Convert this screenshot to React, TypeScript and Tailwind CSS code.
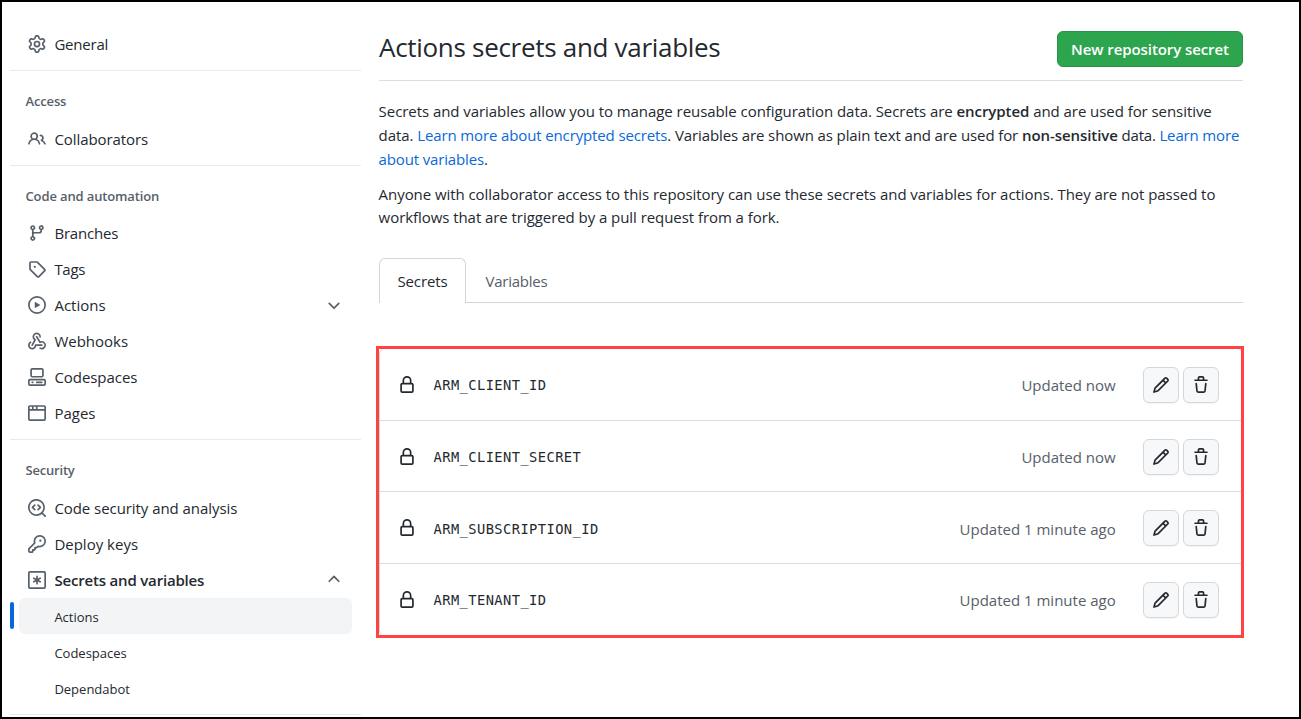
import type { ReactNode } from 'react';
import clsx from 'clsx';

const icons = {
  gear: 'M8 0a8.2 8.2 0 0 1 .701.031C9.444.095 9.99.645 10.16 1.29l.288 1.107c.018.066.079.158.212.224.231.114.454.243.668.386.123.082.233.09.299.071l1.103-.303c.644-.176 1.392.021 1.82.63.27.385.506.792.704 1.218.315.675.111 1.422-.364 1.891l-.814.806c-.049.048-.098.147-.088.294.016.257.016.515 0 .772-.01.147.038.246.088.294l.814.806c.475.469.679 1.216.364 1.891a7.977 7.977 0 0 1-.704 1.217c-.428.61-1.176.807-1.82.63l-1.102-.302c-.067-.019-.177-.011-.3.071a5.909 5.909 0 0 1-.668.386c-.133.066-.194.158-.211.224l-.29 1.106c-.168.646-.715 1.196-1.458 1.26a8.006 8.006 0 0 1-1.402 0c-.743-.064-1.289-.614-1.458-1.26l-.289-1.106c-.018-.066-.079-.158-.212-.224a5.738 5.738 0 0 1-.668-.386c-.123-.082-.233-.09-.299-.071l-1.103.303c-.644.176-1.392-.021-1.82-.63a8.12 8.12 0 0 1-.704-1.218c-.315-.675-.111-1.422.363-1.891l.815-.806c.05-.048.098-.147.088-.294a6.214 6.214 0 0 1 0-.772c.01-.147-.038-.246-.088-.294l-.815-.806C.635 6.045.431 5.298.746 4.623a7.92 7.92 0 0 1 .704-1.217c.428-.61 1.176-.807 1.82-.63l1.102.302c.067.019.177.011.3-.071.214-.143.437-.272.668-.386.133-.066.194-.158.211-.224l.29-1.106C6.009.645 6.556.095 7.299.03 7.53.01 7.764 0 8 0Zm-.571 1.525c-.036.003-.108.036-.137.146l-.289 1.105c-.147.561-.549.967-.998 1.189-.173.086-.34.183-.5.29-.417.278-.97.423-1.529.27l-1.103-.303c-.109-.03-.175.016-.195.045-.22.312-.412.644-.573.99-.014.031-.021.11.059.19l.815.806c.411.406.562.957.53 1.456a4.709 4.709 0 0 0 0 .582c.032.499-.119 1.05-.53 1.456l-.815.806c-.081.08-.073.159-.059.19.162.346.353.677.573.989.02.03.085.076.195.046l1.102-.303c.56-.153 1.113-.008 1.53.27.161.107.328.204.501.29.447.222.85.629.997 1.189l.289 1.105c.029.109.101.143.137.146a6.6 6.6 0 0 0 1.142 0c.036-.003.108-.036.137-.146l.289-1.105c.147-.561.549-.967.998-1.189.173-.086.34-.183.5-.29.417-.278.97-.423 1.529-.27l1.103.303c.109.029.175-.016.195-.045.22-.313.411-.644.573-.99.014-.031.021-.11-.059-.19l-.815-.806c-.411-.406-.562-.957-.53-1.456a4.709 4.709 0 0 0 0-.582c-.032-.499.119-1.05.53-1.456l.815-.806c.081-.08.073-.159.059-.19a6.464 6.464 0 0 0-.573-.989c-.02-.03-.085-.076-.195-.046l-1.102.303c-.56.153-1.113.008-1.53-.27a4.44 4.44 0 0 0-.501-.29c-.447-.222-.85-.629-.997-1.189l-.289-1.105c-.029-.11-.101-.143-.137-.146a6.6 6.6 0 0 0-1.142 0ZM11 8a3 3 0 1 1-6 0 3 3 0 0 1 6 0ZM9.5 8a1.5 1.5 0 1 0-3.001.001A1.5 1.5 0 0 0 9.5 8Z',
  people: 'M2 5.5a3.5 3.5 0 1 1 5.898 2.549 5.508 5.508 0 0 1 3.034 4.084.75.75 0 1 1-1.482.235 4 4 0 0 0-7.9 0 .75.75 0 0 1-1.482-.236A5.507 5.507 0 0 1 3.102 8.05 3.493 3.493 0 0 1 2 5.5ZM11 4a3.001 3.001 0 0 1 2.22 5.018 5.01 5.01 0 0 1 2.56 3.012.749.749 0 0 1-.885.954.752.752 0 0 1-.549-.514 3.507 3.507 0 0 0-2.522-2.372.75.75 0 0 1-.574-.73v-.352a.75.75 0 0 1 .416-.672A1.5 1.5 0 0 0 11 5.5.75.75 0 0 1 11 4Zm-5.5-.5a2 2 0 1 0-.001 3.999A2 2 0 0 0 5.5 3.5Z',
  branch: 'M9.5 3.25a2.25 2.25 0 1 1 3 2.122V6A2.5 2.5 0 0 1 10 8.5H6a1 1 0 0 0-1 1v1.128a2.251 2.251 0 1 1-1.5 0V5.372a2.25 2.25 0 1 1 1.5 0v1.836A2.493 2.493 0 0 1 6 7h4a1 1 0 0 0 1-1v-.628A2.25 2.25 0 0 1 9.5 3.25Zm-6 0a.75.75 0 1 0 1.5 0 .75.75 0 0 0-1.5 0Zm8.25-.75a.75.75 0 1 0 0 1.5.75.75 0 0 0 0-1.5ZM4.25 12a.75.75 0 1 0 0 1.5.75.75 0 0 0 0-1.5Z',
  tag: 'M1 7.775V2.75C1 1.784 1.784 1 2.75 1h5.025c.464 0 .91.184 1.238.513l6.25 6.25a1.75 1.75 0 0 1 0 2.474l-5.026 5.026a1.75 1.75 0 0 1-2.474 0l-6.25-6.25A1.752 1.752 0 0 1 1 7.775Zm1.5 0c0 .066.026.13.073.177l6.25 6.25a.25.25 0 0 0 .354 0l5.025-5.025a.25.25 0 0 0 0-.354l-6.25-6.25a.25.25 0 0 0-.177-.073H2.75a.25.25 0 0 0-.25.25ZM6 5a1 1 0 1 1 0 2 1 1 0 0 1 0-2Z',
  play: 'M8 0a8 8 0 1 1 0 16A8 8 0 0 1 8 0ZM1.5 8a6.5 6.5 0 1 0 13 0 6.5 6.5 0 0 0-13 0Zm4.879-2.773 4.264 2.559a.25.25 0 0 1 0 .428l-4.264 2.559A.25.25 0 0 1 6 10.559V5.442a.25.25 0 0 1 .379-.215Z',
  webhook: 'M5.5 4.25a2.25 2.25 0 0 1 4.5 0 .75.75 0 0 0 1.5 0 3.75 3.75 0 1 0-6.14 2.889l-2.272 4.258a.75.75 0 0 0 1.324.706L7 7.25a.75.75 0 0 0-.309-1.015A2.25 2.25 0 0 1 5.5 4.25Z M7.364 3.607a.75.75 0 0 1 1.03.257l2.608 4.349a3.75 3.75 0 1 1-.628 6.785.75.75 0 0 1 .752-1.299 2.25 2.25 0 1 0-.033-3.88.75.75 0 0 1-1.03-.256L7.107 4.636a.75.75 0 0 1 .257-1.03Z M2.9 8.776A.75.75 0 0 1 2.625 9.8 2.25 2.25 0 1 0 6 11.75a.75.75 0 0 1 .75-.751h5.5a.75.75 0 0 1 0 1.5H7.425a3.751 3.751 0 1 1-5.55-3.998.75.75 0 0 1 1.024.274Z',
  codespaces: 'M0 11.25c0-.966.784-1.75 1.75-1.75h12.5c.966 0 1.75.784 1.75 1.75v3A1.75 1.75 0 0 1 14.25 16H1.75A1.75 1.75 0 0 1 0 14.25Zm2-9.5C2 .784 2.784 0 3.75 0h8.5C13.216 0 14 .784 14 1.75v5a1.75 1.75 0 0 1-1.75 1.75h-8.5A1.75 1.75 0 0 1 2 6.75Zm1.75-.25a.25.25 0 0 0-.25.25v5c0 .138.112.25.25.25h8.5a.25.25 0 0 0 .25-.25v-5a.25.25 0 0 0-.25-.25Zm-2 9.5a.25.25 0 0 0-.25.25v3c0 .138.112.25.25.25h12.5a.25.25 0 0 0 .25-.25v-3a.25.25 0 0 0-.25-.25Z M7 12.75a.75.75 0 0 1 .75-.75h4.5a.75.75 0 0 1 0 1.5h-4.5a.75.75 0 0 1-.75-.75Zm-4 0a.75.75 0 0 1 .75-.75h.5a.75.75 0 0 1 0 1.5h-.5a.75.75 0 0 1-.75-.75Z',
  browser: 'M0 2.75C0 1.784.784 1 1.75 1h12.5c.966 0 1.75.784 1.75 1.75v10.5A1.75 1.75 0 0 1 14.25 15H1.75A1.75 1.75 0 0 1 0 13.25ZM14.5 6h-13v7.25c0 .138.112.25.25.25h12.5a.25.25 0 0 0 .25-.25Zm-6-3.5v2h6V2.75a.25.25 0 0 0-.25-.25ZM5 2.5v2h2v-2Zm-3.25 0a.25.25 0 0 0-.25.25V4.5h2v-2Z',
  codescan: 'M8.47 4.97a.75.75 0 0 0 0 1.06L9.94 7.5 8.47 8.97a.75.75 0 1 0 1.06 1.06l2-2a.75.75 0 0 0 0-1.06l-2-2a.75.75 0 0 0-1.06 0ZM6.53 6.03a.75.75 0 0 0-1.06-1.06l-2 2a.75.75 0 0 0 0 1.06l2 2a.75.75 0 1 0 1.06-1.06L5.06 7.5l1.47-1.47Z M12.246 13.307a7.501 7.501 0 1 1 1.06-1.06l2.474 2.473a.749.749 0 0 1-.326 1.275.749.749 0 0 1-.734-.215ZM1.5 7.5a6.002 6.002 0 0 0 3.608 5.504 6.002 6.002 0 0 0 6.486-1.117.748.748 0 0 1 .292-.293A6 6 0 1 0 1.5 7.5Z',
  key: 'M10.5 0a5.499 5.499 0 1 1-1.288 10.848l-.932.932a.749.749 0 0 1-.53.22H7v.75a.749.749 0 0 1-.22.53l-.5.5a.749.749 0 0 1-.53.22H5v.75a.749.749 0 0 1-.22.53l-.5.5a.749.749 0 0 1-.53.22h-2A1.75 1.75 0 0 1 0 14.25v-2c0-.199.079-.389.22-.53l4.932-4.932A5.5 5.5 0 0 1 10.5 0Zm-4 5.5c-.001.431.069.86.205 1.269a.75.75 0 0 1-.181.768L1.5 12.56v1.69c0 .138.112.25.25.25h1.69l.06-.06v-1.19a.75.75 0 0 1 .75-.75h1.19l.06-.06v-1.19a.75.75 0 0 1 .75-.75h1.19l1.023-1.025a.75.75 0 0 1 .768-.18A4 4 0 1 0 6.5 5.5ZM11 6a1 1 0 1 1 0-2 1 1 0 0 1 0 2Z',
  asterisk: 'M1.75 0h12.5C15.216 0 16 .784 16 1.75v12.5A1.75 1.75 0 0 1 14.25 16H1.75A1.75 1.75 0 0 1 0 14.25V1.75C0 .784.784 0 1.75 0ZM1.5 1.75v12.5c0 .138.112.25.25.25h12.5a.25.25 0 0 0 .25-.25V1.75a.25.25 0 0 0-.25-.25H1.75a.25.25 0 0 0-.25.25Z M8 4a.75.75 0 0 1 .75.75V6.7l1.69-.975a.75.75 0 1 1 .75 1.3L9.5 8l1.69.975a.75.75 0 1 1-.75 1.3L8.75 9.3v1.95a.75.75 0 0 1-1.5 0V9.3l-1.69.975a.75.75 0 1 1-.75-1.3L6.5 8l-1.69-.975a.75.75 0 1 1 .75-1.3l1.69.975V4.75A.75.75 0 0 1 8 4Z',
  lock: 'M4 4a4 4 0 0 1 8 0v2h.25c.966 0 1.75.784 1.75 1.75v5.5A1.75 1.75 0 0 1 12.25 15h-8.5A1.75 1.75 0 0 1 2 13.25v-5.5C2 6.784 2.784 6 3.75 6H4Zm8.25 3.5h-8.5a.25.25 0 0 0-.25.25v5.5c0 .138.112.25.25.25h8.5a.25.25 0 0 0 .25-.25v-5.5a.25.25 0 0 0-.25-.25ZM10.5 6V4a2.5 2.5 0 1 0-5 0v2Z',
  pencil: 'M11.013 1.427a1.75 1.75 0 0 1 2.474 0l1.086 1.086a1.75 1.75 0 0 1 0 2.474l-8.61 8.61c-.21.21-.47.364-.756.445l-3.251.93a.75.75 0 0 1-.927-.928l.929-3.25c.081-.286.235-.547.445-.758l8.61-8.61Zm.176 4.823L9.75 4.81l-6.286 6.287a.253.253 0 0 0-.064.108l-.558 1.953 1.953-.558a.253.253 0 0 0 .108-.064Zm1.238-3.763a.25.25 0 0 0-.354 0L10.811 3.75l1.439 1.44 1.263-1.263a.25.25 0 0 0 0-.354Z',
  trash: 'M11 1.75V3h2.25a.75.75 0 0 1 0 1.5H2.75a.75.75 0 0 1 0-1.5H5V1.75C5 .784 5.784 0 6.75 0h2.5C10.216 0 11 .784 11 1.75ZM4.496 6.675l.66 6.6a.25.25 0 0 0 .249.225h5.19a.25.25 0 0 0 .249-.225l.66-6.6a.75.75 0 0 1 1.492.149l-.66 6.6A1.748 1.748 0 0 1 10.595 15h-5.19a1.75 1.75 0 0 1-1.741-1.575l-.66-6.6a.75.75 0 1 1 1.492-.15ZM6.5 1.75V3h3V1.75a.25.25 0 0 0-.25-.25h-2.5a.25.25 0 0 0-.25.25Z',
  down: 'M12.78 5.22a.749.749 0 0 1 0 1.06l-4.25 4.25a.749.749 0 0 1-1.06 0L3.22 6.28a.749.749 0 1 1 1.06-1.06L8 8.939l3.72-3.719a.749.749 0 0 1 1.06 0Z',
  up: 'M3.22 10.53a.749.749 0 0 1 0-1.06l4.25-4.25a.749.749 0 0 1 1.06 0l4.25 4.25a.749.749 0 1 1-1.06 1.06L8 6.811 4.28 10.53a.749.749 0 0 1-1.06 0Z',
};

type IconName = keyof typeof icons;

function Icon({ name, className }: { name: IconName; className?: string }) {
  return (
    <svg viewBox="0 0 16 16" aria-hidden="true" className={clsx('size-[18px] shrink-0 fill-current', className)}>
      <path d={icons[name]} />
    </svg>
  );
}

function NavItem({ icon, label, chevron, className }: { icon: IconName; label: string; chevron?: IconName; className?: string }) {
  return (
    <a className="flex h-9 items-center pr-[9px] pl-[9px]">
      <Icon name={icon} className="text-[#57606a]" />
      <span className={clsx('ml-2 flex-1 pl-[0.4px] text-[15px]', className)}>{label}</span>
      {chevron && <Icon name={chevron} className={clsx('text-[#57606a]', chevron === 'down' ? 'mt-px' : '-mt-0.5')} />}
    </a>
  );
}

function SubItem({ label, active }: { label: string; active?: boolean }) {
  return (
    <a className={clsx('relative flex h-9 items-center rounded-md pt-[3px] pl-[35.4px] text-[13px]', active && 'bg-[#f3f4f6]')}>
      {active && <span className="absolute top-1 -left-[9px] h-[27px] w-1 rounded-[3px] bg-[#0969da]" />}
      {label}
    </a>
  );
}

function Group({ title, className, children }: { title?: string; className?: string; children: ReactNode }) {
  return (
    <section className="border-b border-[#e8eaec] px-[9px] pb-2">
      {title && <h3 className={clsx('pt-[21px] pl-[6.5px] text-[13px] leading-[18px] font-semibold text-[#57606a]', className)}>{title}</h3>}
      {children}
    </section>
  );
}

function Sidebar() {
  return (
    <nav className="ml-2 w-[351px] shrink-0 pt-6">
      <Group>
        <NavItem icon="gear" label="General" className="tracking-[-0.2px]" />
      </Group>
      <Group title="Access" className="h-[50px] tracking-[-0.15px]">
        <NavItem icon="people" label="Collaborators" className="tracking-[-0.07px]" />
      </Group>
      <Group title="Code and automation" className="h-[49px] tracking-[-0.13px]">
        <NavItem icon="branch" label="Branches" className="tracking-[-0.2px]" />
        <NavItem icon="tag" label="Tags" className="tracking-[-0.3px]" />
        <NavItem icon="play" label="Actions" chevron="down" />
        <NavItem icon="webhook" label="Webhooks" />
        <NavItem icon="codespaces" label="Codespaces" className="tracking-[-0.05px]" />
        <NavItem icon="browser" label="Pages" />
      </Group>
      <Group title="Security" className="h-[50px] tracking-[-0.2px]">
        <NavItem icon="codescan" label="Code security and analysis" className="tracking-[-0.06px]" />
        <NavItem icon="key" label="Deploy keys" />
        <NavItem icon="asterisk" label="Secrets and variables" chevron="up" className="font-semibold tracking-[-0.18px]" />
        <SubItem label="Actions" active />
        <SubItem label="Codespaces" />
        <SubItem label="Dependabot" />
      </Group>
    </nav>
  );
}

const secrets = [
  { name: 'ARM_CLIENT_ID', updated: 'Updated now', row: 'h-[72px]', text: '' },
  { name: 'ARM_CLIENT_SECRET', updated: 'Updated now', row: 'h-[71px]', text: '' },
  { name: 'ARM_SUBSCRIPTION_ID', updated: 'Updated 1 minute ago', row: 'h-[72px]', text: 'pt-[2px]' },
  { name: 'ARM_TENANT_ID', updated: 'Updated 1 minute ago', row: 'h-[72px]', text: '' },
];

function IconButton({ icon, label }: { icon: IconName; label: string }) {
  return (
    <button aria-label={label} className="flex size-9 items-center justify-center rounded-md border border-[#d5d8da] bg-[#f6f8fa] shadow-[0_1px_0_rgba(27,31,36,0.04)]">
      <Icon name={icon} />
    </button>
  );
}

function SecretsList() {
  return (
    <div className="relative mt-[45px] h-[289px] rounded-md border border-[#d0d7de]">
      {secrets.map((s) => (
        <div key={s.name} className={clsx('flex items-start border-b border-[#d8dee4] pt-[18px] pr-[23px] pl-[18px] last-of-type:border-b-0', s.row)}>
          <div className="flex h-9 flex-1 items-center">
            <Icon name="lock" />
            <span className={clsx("ml-[17.5px] flex-1 font-['DejaVu_Sans_Mono',monospace] text-[13.75px] tracking-[0.41px]", s.text)}>{s.name}</span>
            <span className={clsx('mr-[27.3px] text-[15px] text-[#57606a]', s.text)}>{s.updated}</span>
            <div className="flex gap-1">
              <IconButton icon="pencil" label="Edit" />
              <IconButton icon="trash" label="Delete" />
            </div>
          </div>
        </div>
      ))}
      <span className="pointer-events-none absolute -top-[3px] -right-[2px] -bottom-[2px] -left-1 border-[3px] border-[#ff4343]" />
    </div>
  );
}

export default function App() {
  return (
    <div className="flex h-[719px] w-[1301px] overflow-hidden border-2 border-black bg-white font-['Open_Sans',sans-serif] text-[#24292f]">
      <Sidebar />
      <main className="ml-[18px] w-[864px] pt-[29px]">
        <header className="flex h-[50px] items-start justify-between border-b border-[#d8dee4]">
          <h1 className="text-[26px] leading-[32px] tracking-[-0.3px]">Actions secrets and variables</h1>
          <button className="flex h-9 w-[186px] items-center justify-center rounded-md border border-[#2a9147] bg-[#2da44e] text-[15px] font-semibold tracking-[-0.08px] text-white">
            New repository secret
          </button>
        </header>
        <p className="-ml-[0.4px] mt-[18px] text-[15px] leading-6 whitespace-nowrap tracking-[-0.06px]">
          Secrets and variables allow you to manage reusable configuration data. Secrets are <strong className="font-semibold">encrypted</strong> and are used for sensitive
          <br />
          data. <a className="tracking-[-0.13px] text-[#0969da]">Learn more about encrypted secrets</a>
          <span className="tracking-[-0.11px]">. Variables are shown as plain text and are used for </span>
          <strong className="font-semibold">non-sensitive</strong>
          <span className="tracking-[-0.2px]"> data. </span>
          <a className="tracking-[-0.15px] text-[#0969da]">Learn more</a>
          <br />
          <a className="tracking-[-0.15px] text-[#0969da]">about variables</a>.
        </p>
        <p className="-ml-[0.4px] mt-3 text-[15px] leading-[23px] whitespace-nowrap tracking-[-0.06px]">
          Anyone with collaborator access to this repository can use these secrets and variables for actions. They are not passed to
          <br />
          workflows that are triggered by a pull request from a fork.
        </p>
        <div className="mt-[29px] flex h-[45px] text-[15px]">
          <div className="flex w-[87px] items-center justify-center rounded-t-md border border-b-0 border-[#d0d7de] tracking-[-0.1px]">Secrets</div>
          <div className="flex flex-1 items-center border-b border-[#d0d7de] pt-[3px] pl-[19.5px] tracking-[-0.25px] text-[#57606a]">Variables</div>
        </div>
        <SecretsList />
      </main>
    </div>
  );
}
